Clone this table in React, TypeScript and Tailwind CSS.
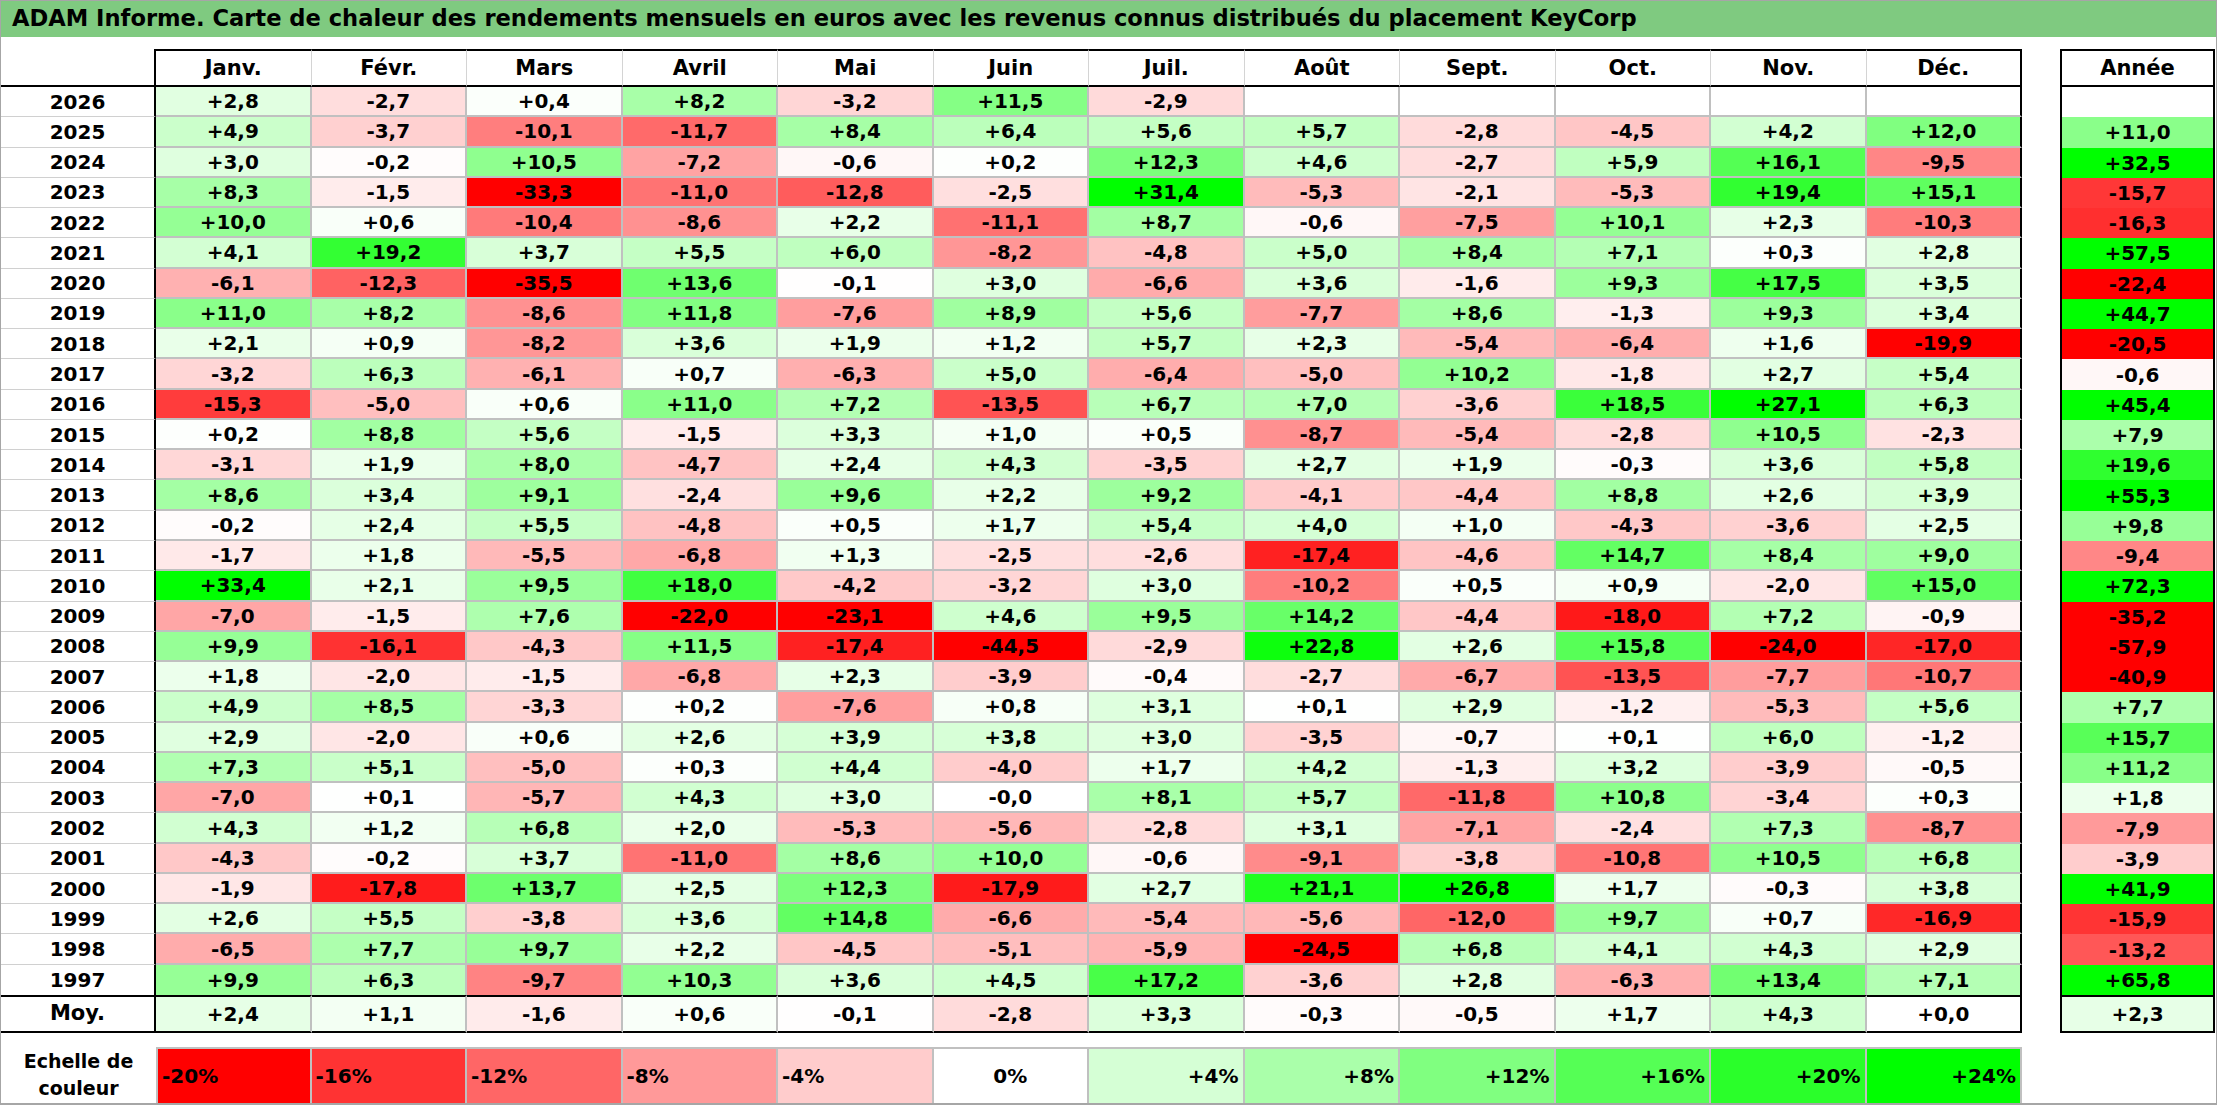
import React from 'react';

const months = ['Janv.', 'Févr.', 'Mars', 'Avril', 'Mai', 'Juin', 'Juil.', 'Août', 'Sept.', 'Oct.', 'Nov.', 'Déc.'];

// année, 12 mois, total annuel
const rows: [string, string[], string][] = [
  ['2026', ['+2,8', '-2,7', '+0,4', '+8,2', '-3,2', '+11,5', '-2,9', '', '', '', '', ''], ''],
  ['2025', ['+4,9', '-3,7', '-10,1', '-11,7', '+8,4', '+6,4', '+5,6', '+5,7', '-2,8', '-4,5', '+4,2', '+12,0'], '+11,0'],
  ['2024', ['+3,0', '-0,2', '+10,5', '-7,2', '-0,6', '+0,2', '+12,3', '+4,6', '-2,7', '+5,9', '+16,1', '-9,5'], '+32,5'],
  ['2023', ['+8,3', '-1,5', '-33,3', '-11,0', '-12,8', '-2,5', '+31,4', '-5,3', '-2,1', '-5,3', '+19,4', '+15,1'], '-15,7'],
  ['2022', ['+10,0', '+0,6', '-10,4', '-8,6', '+2,2', '-11,1', '+8,7', '-0,6', '-7,5', '+10,1', '+2,3', '-10,3'], '-16,3'],
  ['2021', ['+4,1', '+19,2', '+3,7', '+5,5', '+6,0', '-8,2', '-4,8', '+5,0', '+8,4', '+7,1', '+0,3', '+2,8'], '+57,5'],
  ['2020', ['-6,1', '-12,3', '-35,5', '+13,6', '-0,1', '+3,0', '-6,6', '+3,6', '-1,6', '+9,3', '+17,5', '+3,5'], '-22,4'],
  ['2019', ['+11,0', '+8,2', '-8,6', '+11,8', '-7,6', '+8,9', '+5,6', '-7,7', '+8,6', '-1,3', '+9,3', '+3,4'], '+44,7'],
  ['2018', ['+2,1', '+0,9', '-8,2', '+3,6', '+1,9', '+1,2', '+5,7', '+2,3', '-5,4', '-6,4', '+1,6', '-19,9'], '-20,5'],
  ['2017', ['-3,2', '+6,3', '-6,1', '+0,7', '-6,3', '+5,0', '-6,4', '-5,0', '+10,2', '-1,8', '+2,7', '+5,4'], '-0,6'],
  ['2016', ['-15,3', '-5,0', '+0,6', '+11,0', '+7,2', '-13,5', '+6,7', '+7,0', '-3,6', '+18,5', '+27,1', '+6,3'], '+45,4'],
  ['2015', ['+0,2', '+8,8', '+5,6', '-1,5', '+3,3', '+1,0', '+0,5', '-8,7', '-5,4', '-2,8', '+10,5', '-2,3'], '+7,9'],
  ['2014', ['-3,1', '+1,9', '+8,0', '-4,7', '+2,4', '+4,3', '-3,5', '+2,7', '+1,9', '-0,3', '+3,6', '+5,8'], '+19,6'],
  ['2013', ['+8,6', '+3,4', '+9,1', '-2,4', '+9,6', '+2,2', '+9,2', '-4,1', '-4,4', '+8,8', '+2,6', '+3,9'], '+55,3'],
  ['2012', ['-0,2', '+2,4', '+5,5', '-4,8', '+0,5', '+1,7', '+5,4', '+4,0', '+1,0', '-4,3', '-3,6', '+2,5'], '+9,8'],
  ['2011', ['-1,7', '+1,8', '-5,5', '-6,8', '+1,3', '-2,5', '-2,6', '-17,4', '-4,6', '+14,7', '+8,4', '+9,0'], '-9,4'],
  ['2010', ['+33,4', '+2,1', '+9,5', '+18,0', '-4,2', '-3,2', '+3,0', '-10,2', '+0,5', '+0,9', '-2,0', '+15,0'], '+72,3'],
  ['2009', ['-7,0', '-1,5', '+7,6', '-22,0', '-23,1', '+4,6', '+9,5', '+14,2', '-4,4', '-18,0', '+7,2', '-0,9'], '-35,2'],
  ['2008', ['+9,9', '-16,1', '-4,3', '+11,5', '-17,4', '-44,5', '-2,9', '+22,8', '+2,6', '+15,8', '-24,0', '-17,0'], '-57,9'],
  ['2007', ['+1,8', '-2,0', '-1,5', '-6,8', '+2,3', '-3,9', '-0,4', '-2,7', '-6,7', '-13,5', '-7,7', '-10,7'], '-40,9'],
  ['2006', ['+4,9', '+8,5', '-3,3', '+0,2', '-7,6', '+0,8', '+3,1', '+0,1', '+2,9', '-1,2', '-5,3', '+5,6'], '+7,7'],
  ['2005', ['+2,9', '-2,0', '+0,6', '+2,6', '+3,9', '+3,8', '+3,0', '-3,5', '-0,7', '+0,1', '+6,0', '-1,2'], '+15,7'],
  ['2004', ['+7,3', '+5,1', '-5,0', '+0,3', '+4,4', '-4,0', '+1,7', '+4,2', '-1,3', '+3,2', '-3,9', '-0,5'], '+11,2'],
  ['2003', ['-7,0', '+0,1', '-5,7', '+4,3', '+3,0', '-0,0', '+8,1', '+5,7', '-11,8', '+10,8', '-3,4', '+0,3'], '+1,8'],
  ['2002', ['+4,3', '+1,2', '+6,8', '+2,0', '-5,3', '-5,6', '-2,8', '+3,1', '-7,1', '-2,4', '+7,3', '-8,7'], '-7,9'],
  ['2001', ['-4,3', '-0,2', '+3,7', '-11,0', '+8,6', '+10,0', '-0,6', '-9,1', '-3,8', '-10,8', '+10,5', '+6,8'], '-3,9'],
  ['2000', ['-1,9', '-17,8', '+13,7', '+2,5', '+12,3', '-17,9', '+2,7', '+21,1', '+26,8', '+1,7', '-0,3', '+3,8'], '+41,9'],
  ['1999', ['+2,6', '+5,5', '-3,8', '+3,6', '+14,8', '-6,6', '-5,4', '-5,6', '-12,0', '+9,7', '+0,7', '-16,9'], '-15,9'],
  ['1998', ['-6,5', '+7,7', '+9,7', '+2,2', '-4,5', '-5,1', '-5,9', '-24,5', '+6,8', '+4,1', '+4,3', '+2,9'], '-13,2'],
  ['1997', ['+9,9', '+6,3', '-9,7', '+10,3', '+3,6', '+4,5', '+17,2', '-3,6', '+2,8', '-6,3', '+13,4', '+7,1'], '+65,8'],
];

const average = ['+2,4', '+1,1', '-1,6', '+0,6', '-0,1', '-2,8', '+3,3', '-0,3', '-0,5', '+1,7', '+4,3', '+0,0'];

const scale = [-20, -16, -12, -8, -4, 0, 4, 8, 12, 16, 20, 24];

// échelle : -20 rouge, 0 blanc, +24 vert
const heat = (v: number | string) => {
  if (v === '') return '#ffffff';
  const n = typeof v === 'number' ? v : parseFloat(String(v).replace(',', '.'));
  if (n < 0) {
    const c = Math.round(255 * (1 - Math.min(1, -n / 20)));
    return `rgb(255, ${c}, ${c})`;
  }
  const c = Math.round(255 * (1 - Math.min(1, n / 24)));
  return `rgb(${c}, 255, ${c})`;
};

const font = { fontFamily: '"DejaVu Sans", "Liberation Sans", sans-serif' };

export default function App() {
  return (
    <div
      className="w-[2217px] h-[1105px] bg-white border-l border-r border-t border-b-2 border-[#a6a6a6] text-black font-bold overflow-hidden"
      style={font}
    >
      {/* Titre */}
      <div className="h-9 bg-[#7fca80] flex items-center pl-[11px] text-[22.6px] whitespace-nowrap">
        ADAM Informe. Carte de chaleur des rendements mensuels en euros avec les revenus connus distribués du placement KeyCorp
      </div>

      <div className="mt-3 grid grid-cols-[155px_repeat(12,155.5px)_38px_155px] text-[20px] leading-none">
        {/* En-tête */}
        <div className="h-[38px] border-r-2 border-b-2 border-black" />
        {months.map((m, i) => (
          <div
            key={m}
            className={`h-[38px] flex items-center justify-center text-[21px] border-t-2 border-b-2 border-black ${
              i === 11 ? 'border-r-2' : 'border-r border-r-[#d4d4d4]'
            }`}
          >
            {m}
          </div>
        ))}
        <div />
        <div className="h-[38px] flex items-center justify-center text-[21px] border-2 border-black">Année</div>

        {/* Lignes annuelles */}
        {rows.map(([year, vals, total], r) => {
          const last = r === rows.length - 1;
          return (
            <React.Fragment key={year}>
              <div
                className={`h-[30.27px] flex items-center justify-center border-r-2 border-black ${
                  last ? '' : 'border-b border-b-[#d0d0d0]'
                }`}
              >
                {year}
              </div>
              {vals.map((v, i) => (
                <div
                  key={i}
                  className={`h-[30.27px] flex items-center justify-center ${
                    i === 11 ? 'border-r-2 border-r-black' : 'border-r-2 border-r-[#c0c0c0]'
                  } ${last ? '' : 'border-b-2 border-b-[#c0c0c0]'}`}
                  style={{ backgroundColor: heat(v) }}
                >
                  {v}
                </div>
              ))}
              <div />
              <div
                className="h-[30.27px] flex items-center justify-center border-l-2 border-r-2 border-black"
                style={{ backgroundColor: heat(total) }}
              >
                {total}
              </div>
            </React.Fragment>
          );
        })}

        {/* Moyenne */}
        <div className="h-[38px] flex items-center justify-center text-[21px] border-t-2 border-b-2 border-r-2 border-black">Moy.</div>
        {average.map((v, i) => (
          <div
            key={i}
            className={`h-[38px] flex items-center justify-center border-t-2 border-b-2 border-black ${
              i === 11 ? 'border-r-2' : 'border-r-2 border-r-[#c0c0c0]'
            }`}
            style={{ backgroundColor: heat(v) }}
          >
            {v}
          </div>
        ))}
        <div />
        <div
          className="h-[38px] flex items-center justify-center border-2 border-black"
          style={{ backgroundColor: heat('+2,3') }}
        >
          +2,3
        </div>

        {/* Echelle de couleur */}
        <div className="col-span-15 h-[14px]" />
        <div className="h-[56px] flex flex-col items-center justify-center text-center text-[19px] leading-[27px]">
          <span>Echelle de</span>
          <span>couleur</span>
        </div>
        {scale.map((s, i) => (
          <div
            key={s}
            className={`h-[56px] flex items-center border-t-2 border-r-2 border-[#c0c0c0] ${
              i === 0 ? 'border-l-2' : ''
            } ${s < 0 ? 'justify-start pl-1' : s === 0 ? 'justify-center' : 'justify-end pr-1'}`}
            style={{ backgroundColor: heat(s) }}
          >
            {s > 0 ? `+${s}%` : `${s}%`}
          </div>
        ))}
        <div />
        <div />
      </div>
    </div>
  );
}
